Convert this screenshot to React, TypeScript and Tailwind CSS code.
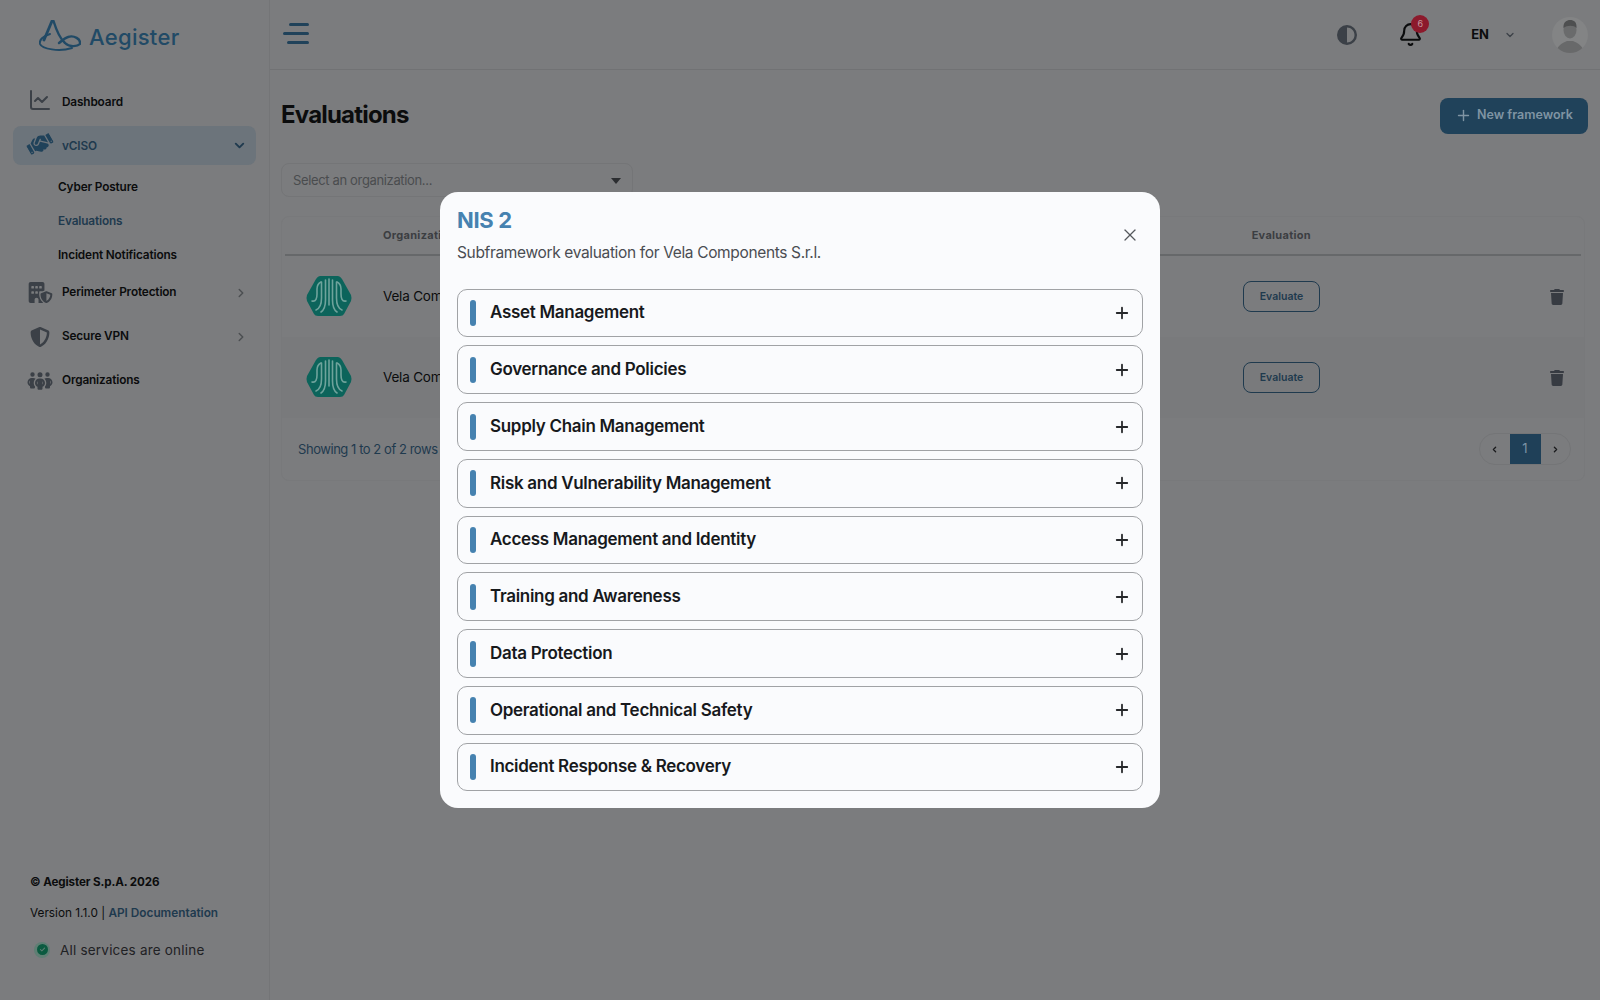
import { Bell, ChevronDown, ChevronLeft, ChevronRight, Plus, X } from "lucide-react";
import {
  FaBuildingShield,
  FaCircleCheck,
  FaCircleHalfStroke,
  FaHandshake,
  FaPeopleGroup,
  FaShieldHalved,
  FaTrash,
} from "react-icons/fa6";
import { LuChartLine } from "react-icons/lu";

const sections = [
  "Asset Management",
  "Governance and Policies",
  "Supply Chain Management",
  "Risk and Vulnerability Management",
  "Access Management and Identity",
  "Training and Awareness",
  "Data Protection",
  "Operational and Technical Safety",
  "Incident Response & Recovery",
];

function AegisterMark() {
  return (
    <svg viewBox="0 0 42 32" className="h-[32px] w-[42px]" fill="none" stroke="#214a66" strokeLinecap="round">
      <path d="M13 1 L5 20" strokeWidth="2.8" />
      <path d="M14.500 1 C17 9 20 18 26 23 C30 27 38 27 41 24 C42 19 35 15 29 17 C25 18 23 21 20 23" strokeWidth="2.4" />
      <path d="M11 14 C4 16 0 20 1 24 C3 29 20 32 33 28" strokeWidth="2" />
    </svg>
  );
}

function VelaLogo() {
  return (
    <svg viewBox="0 0 46 40" className="h-[40px] w-[46px]" fill="none">
      <path
        d="M14 0 H32 Q34 0 36 3 L45 19 Q46 22 45 25 L38 38 Q37 40 34 40 H12 Q9 40 8 38 L1 25 Q0 22 1 19 L10 3 Q12 0 14 0Z"
        fill="#0c645b"
      />
      <g stroke="#6fa39c" strokeWidth="1.6" strokeLinecap="round">
        <path d="M6 25 C10 26 11 22 11 18 V13 C11 9 13 7 15 6" />
        <path d="M40 25 C36 26 35 22 35 18 V13 C35 9 33 7 31 6" />
        <path d="M10 34 C15 32 15.500 27 15.500 22 V6" />
        <path d="M36 34 C31 32 30.500 27 30.500 22 V6" />
        <path d="M19.500 4 V24 C19.500 30 18 34 15 36" />
        <path d="M26.500 4 V24 C26.500 30 28 34 31 36" />
        <path d="M23 3 V29" />
      </g>
    </svg>
  );
}

function Avatar() {
  return (
    <div className="flex h-[36px] w-[36px] items-end justify-center overflow-hidden rounded-full bg-[#838485]">
      <svg viewBox="0 0 36 36" className="h-[36px] w-[36px]">
        <ellipse cx="18" cy="13" rx="6.500" ry="8.500" fill="#6a6b6c" />
        <path d="M11.500 11 C11 5 15 3 18 3 C22 3 25 5 24.500 11 C22 8 15 8 11.500 11Z" fill="#4e4f50" />
        <path d="M4 36 C5 28 11 26 15 24 H21 C25 26 31 28 32 36Z" fill="#68696a" />
      </svg>
    </div>
  );
}

function NavItem({ icon, label, chevron }: { icon: React.ReactNode; label: string; chevron?: boolean }) {
  return (
    <div className="mx-[13px] flex h-[39px] items-center rounded-lg">
      <span className="flex w-[49px] shrink-0 justify-center pl-[5px] text-[#3b4047]">{icon}</span>
      <span className="flex-1 pt-[1px] text-[11.8px] font-semibold tracking-[-0.15px] text-[#0b0c0d]">{label}</span>
      {chevron && <ChevronRight className="mr-[8px] h-[14px] w-[14px] text-[#4c4f52]" strokeWidth={2.5} />}
    </div>
  );
}

function SubItem({ label, active }: { label: string; active?: boolean }) {
  return (
    <div className={`flex h-[34px] items-center pl-[58px] pt-[2px] text-[11.8px] font-semibold tracking-[-0.15px] ${active ? "text-[#1f3a4e]" : "text-[#0b0c0d]"}`}>
      {label}
    </div>
  );
}

function Sidebar() {
  return (
    <aside className="flex h-screen w-[270px] shrink-0 flex-col border-r border-[#747577]">
      <div className="flex h-[83px] shrink-0 items-start pl-[39px] pt-[20px]">
        <AegisterMark />
        <span className="ml-[8px] mt-[3px] text-[22px] font-medium leading-[28px] tracking-[0.3px] text-[#214a66]">Aegister</span>
      </div>
      <div className="flex flex-col">
        <NavItem icon={<span className="-mt-[5px]"><LuChartLine className="h-[24px] w-[24px]" strokeWidth={2} /></span>} label="Dashboard" />
        <div className="mx-[13px] mt-[4px] flex h-[39px] items-center rounded-lg bg-[#6c747b]">
          <span className="flex w-[49px] shrink-0 justify-center pl-[5px] text-[#20425a]">
            <FaHandshake className="-mt-[4px] h-[24px] w-[26px] -rotate-[30deg]" />
          </span>
          <span className="flex-1 pt-[2px] text-[11.8px] font-semibold tracking-[-0.15px] text-[#1f3a4e]">vCISO</span>
          <ChevronDown className="mr-[9px] h-[15px] w-[15px] text-[#1f3a4e]" strokeWidth={3} />
        </div>
        <div className="mt-[5px]">
          <SubItem label="Cyber Posture" />
          <SubItem label="Evaluations" active />
          <SubItem label="Incident Notifications" />
        </div>
        <div className="mt-[1px]">
          <NavItem icon={<FaBuildingShield className="h-[21px] w-[25px]" />} label="Perimeter Protection" chevron />
        </div>
        <div className="mt-[5px]">
          <NavItem icon={<FaShieldHalved className="h-[20px] w-[20px]" />} label="Secure VPN" chevron />
        </div>
        <div className="mt-[5px]">
          <NavItem icon={<FaPeopleGroup className="h-[20px] w-[26px]" />} label="Organizations" />
        </div>
      </div>
      <div className="mt-auto pb-[40px] pl-[30px]">
        <p className="text-[11.6px] font-bold leading-[18px] tracking-[-0.1px] text-[#0b0c0d]">© Aegister S.p.A. 2026</p>
        <p className="mt-[13px] text-[11.8px] leading-[18px] text-[#0b0c0d]">
          Version 1.1.0 | <span className="font-semibold text-[#1f3a4e]">API Documentation</span>
        </p>
        <div className="mt-[18px] flex items-center">
          <span className="ml-[4px] flex h-[16px] w-[16px] items-center justify-center rounded-full bg-[#5f7f74]">
            <FaCircleCheck className="h-[11px] w-[11px] text-[#0b5a40]" />
          </span>
          <span className="ml-[10px] text-[13.500px] tracking-[0.2px] text-[#1f2124]">All services are online</span>
        </div>
      </div>
    </aside>
  );
}

function Topbar() {
  return (
    <header className="flex h-[70px] shrink-0 items-center border-b border-[#717274] pl-[13px] pr-[12px]">
      <div className="-mt-[2px] flex h-[21px] w-[26px] flex-col items-end justify-between">
        <span className="h-[3px] w-[20px] rounded-full bg-[#20425a]" />
        <span className="h-[3px] w-[26px] rounded-full bg-[#20425a]" />
        <span className="h-[3px] w-[22px] rounded-full bg-[#20425a]" />
      </div>
      <div className="ml-auto flex items-center">
        <FaCircleHalfStroke className="h-[20px] w-[20px] text-[#3b4047]" />
        <div className="relative ml-[41px]">
          <Bell className="h-[25px] w-[25px] text-[#0b0c0d]" strokeWidth={2} />
          <span className="absolute -right-[6px] -top-[7px] flex h-[18px] w-[18px] items-center justify-center rounded-full bg-[#8c1a2c] text-[9px] text-[#c59aa1]">
            6
          </span>
        </div>
        <span className="ml-[48px] text-[13px] font-bold text-[#0b0c0d]">EN</span>
        <ChevronDown className="ml-[15px] h-[12px] w-[12px] text-[#3b4047]" strokeWidth={2.5} />
        <div className="ml-[36px]">
          <Avatar />
        </div>
      </div>
    </header>
  );
}

function TableRow({ striped }: { striped?: boolean }) {
  return (
    <div className={`flex h-[81px] items-center ${striped ? "bg-[#797a7c]" : ""}`}>
      <div className="-mt-[1px] flex w-[101px] shrink-0 pl-[24px]">
        <VelaLogo />
      </div>
      <span className="whitespace-nowrap text-[13.500px] tracking-[-0.2px] text-[#0b0c0d]">Vela Components S.r.l.</span>
      <div className="ml-auto flex items-center">
        <button type="button" className="h-[31px] w-[77px] rounded-lg border border-[#1f3a4e] text-[10.500px] font-semibold text-[#1f3a4e]">
          Evaluate
        </button>
        <span className="ml-[229px] mr-[19px]">
          <FaTrash className="h-[16px] w-[16px] text-[#373b42]" />
        </span>
      </div>
    </div>
  );
}

function Evaluations() {
  return (
    <section className="flex-1 pl-[11px] pr-[12px]">
      <div className="flex h-[93px] items-start justify-between pt-[28px]">
        <h1 className="pt-[1px] text-[24px] font-bold leading-[32px] tracking-[-0.8px] text-[#0b0c0d]">Evaluations</h1>
        <button type="button" className="flex h-[36px] w-[148px] items-center rounded-lg bg-[#20425a] pb-[1px] pl-[15px] text-[12.500px] font-semibold text-[#7f94a3]">
          <Plus className="mr-[5px] h-[17px] w-[17px]" strokeWidth={2} />
          New framework
        </button>
      </div>
      <div className="flex h-[34px] w-[352px] items-center justify-between rounded-lg border border-[#747577] pl-[11px] pr-[11px] pt-[2px] text-[13px] tracking-[-0.35px] text-[#4a4c4e]">
        <span>Select an organization...</span>
        <span className="h-0 w-0 border-x-[5px] border-t-[6px] border-x-transparent border-t-[#2b2d30]" />
      </div>
      <div className="mt-[19px] w-[1304px] rounded-lg border border-[#78797b]">
        <div className="mx-[3px] flex h-[39px] items-center border-b-2 border-[#66686a] text-[11px] font-bold tracking-[0.3px] text-[#3b3e42]">
          <span className="ml-[98px]">Organization</span>
          <span className="ml-auto mr-[270px]">Evaluation</span>
        </div>
        <TableRow />
        <TableRow striped />
        <div className="flex h-[62px] items-center justify-between pl-[16px] pr-[13px]">
          <span className="pt-[2px] text-[13px] tracking-[-0.45px] text-[#1f3a4e]">Showing 1 to 2 of 2 rows</span>
          <div className="flex h-[32px] w-[92px] items-stretch overflow-hidden rounded-2xl border border-[#747577]">
            <span className="flex flex-1 items-center justify-center"><ChevronLeft className="h-[9px] w-[9px] text-[#1a1b1d]" strokeWidth={3.5} /></span>
            <span className="flex w-[31px] items-center justify-center bg-[#1f4058] text-[13px] text-[#7d94a6]">1</span>
            <span className="flex flex-1 items-center justify-center"><ChevronRight className="h-[9px] w-[9px] text-[#1a1b1d]" strokeWidth={3.5} /></span>
          </div>
        </div>
      </div>
    </section>
  );
}

function SubframeworkModal() {
  return (
    <div className="fixed inset-0 flex items-center justify-center">
      <div className="w-[720px] rounded-[18px] bg-[#fafbfd] px-[17px] pb-[17px] pt-[14px]">
        <div className="flex items-center justify-between">
          <div>
            <h2 className="text-[22px] font-bold leading-[28px] tracking-[-0.3px] text-[#4682b0]">NIS 2</h2>
            <p className="mt-[7px] text-[15.500px] leading-[24px] tracking-[-0.35px] text-[#4a4d52]">Subframework evaluation for Vela Components S.r.l.</p>
          </div>
          <X className="mr-[3px] h-[20px] w-[20px] text-[#55585c]" strokeWidth={1.5} />
        </div>
        <div className="mt-[24px] flex flex-col gap-[8px]">
          {sections.map((name) => (
            <div key={name} className="flex h-[48.750px] items-center rounded-[10px] border border-[#a0a2a5] pl-[12px] pr-[11px]">
              <span className="h-[26px] w-[6px] rounded-full bg-[#4682b0]" />
              <span className="ml-[14px] flex-1 text-[17px] font-semibold tracking-[-0.3px] text-[#17191c]">{name}</span>
              <Plus className="h-[18px] w-[18px] text-[#26282b]" strokeWidth={2.4} />
            </div>
          ))}
        </div>
      </div>
    </div>
  );
}

export default function App() {
  return (
    <div className="flex h-screen overflow-hidden bg-[#7b7c7e] font-['Inter',sans-serif]">
      <Sidebar />
      <main className="flex min-w-0 flex-1 flex-col">
        <Topbar />
        <Evaluations />
      </main>
      <SubframeworkModal />
    </div>
  );
}
